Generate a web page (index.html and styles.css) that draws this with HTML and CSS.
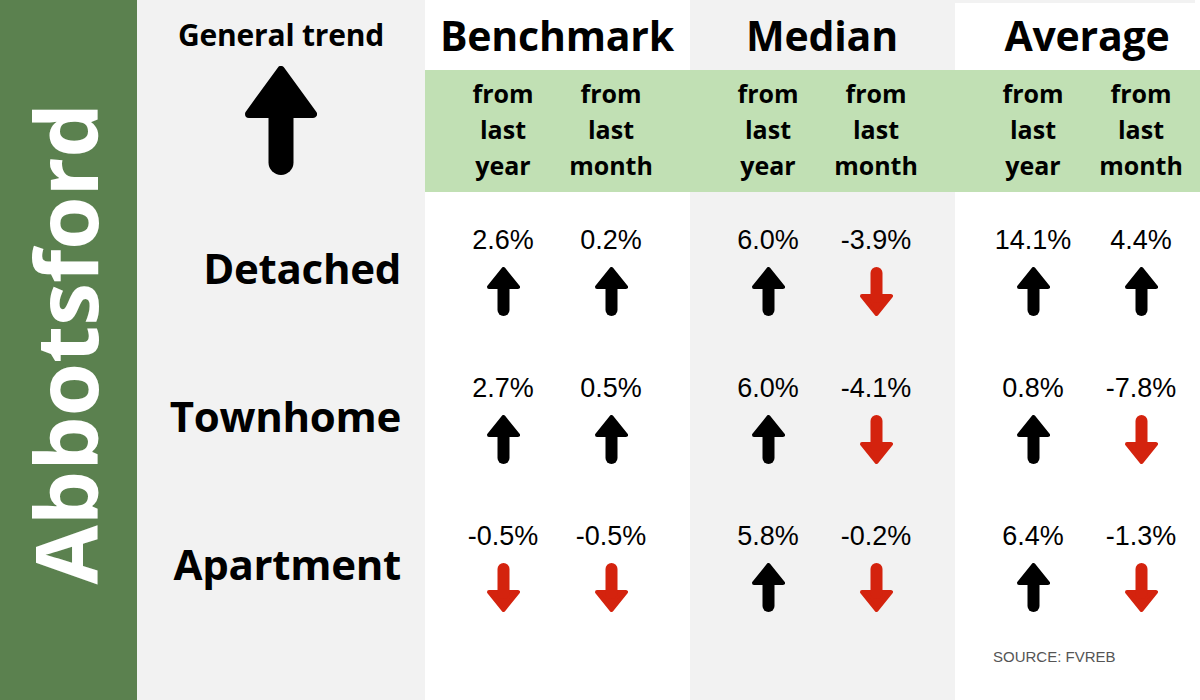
FILE: index.html
```html
<!DOCTYPE html>
<html lang="en">
<head>
<meta charset="utf-8">
<title>Abbotsford market trends</title>
<link rel="stylesheet" href="styles.css">
</head>
<body>
<div class="page">
  <aside class="side"><span class="city">Abbotsford</span></aside>

  <section class="labels">
    <div class="trend">
      <div class="trend-title">General trend</div>
      <svg class="big-arrow" viewBox="0 0 72 109" width="72" height="109" aria-hidden="true">
        <polygon points="36,4 68,48 4,48" fill="#000" stroke="#000" stroke-width="8" stroke-linejoin="round"/>
        <line x1="36" y1="46" x2="36" y2="96.5" stroke="#000" stroke-width="25" stroke-linecap="round"/>
      </svg>
    </div>
    <div class="row-label">Detached</div>
    <div class="row-label">Townhome</div>
    <div class="row-label">Apartment</div>
  </section>

  <section class="group white">
    <h2 class="title">Benchmark</h2>
    <div class="sub"><div>from<br>last<br>year</div><div>from<br>last<br>month</div></div>
    <div class="row">
      <div class="cell"><span class="pct">2.6%</span><svg class="arrow up" viewBox="0 0 33 49"><use href="#up"/></svg></div>
      <div class="cell"><span class="pct">0.2%</span><svg class="arrow up" viewBox="0 0 33 49"><use href="#up"/></svg></div>
    </div>
    <div class="row">
      <div class="cell"><span class="pct">2.7%</span><svg class="arrow up" viewBox="0 0 33 49"><use href="#up"/></svg></div>
      <div class="cell"><span class="pct">0.5%</span><svg class="arrow up" viewBox="0 0 33 49"><use href="#up"/></svg></div>
    </div>
    <div class="row">
      <div class="cell"><span class="pct">-0.5%</span><svg class="arrow down" viewBox="0 0 33 49"><use href="#down"/></svg></div>
      <div class="cell"><span class="pct">-0.5%</span><svg class="arrow down" viewBox="0 0 33 49"><use href="#down"/></svg></div>
    </div>
  </section>

  <section class="group gray">
    <h2 class="title">Median</h2>
    <div class="sub"><div>from<br>last<br>year</div><div>from<br>last<br>month</div></div>
    <div class="row">
      <div class="cell"><span class="pct">6.0%</span><svg class="arrow up" viewBox="0 0 33 49"><use href="#up"/></svg></div>
      <div class="cell"><span class="pct">-3.9%</span><svg class="arrow down" viewBox="0 0 33 49"><use href="#down"/></svg></div>
    </div>
    <div class="row">
      <div class="cell"><span class="pct">6.0%</span><svg class="arrow up" viewBox="0 0 33 49"><use href="#up"/></svg></div>
      <div class="cell"><span class="pct">-4.1%</span><svg class="arrow down" viewBox="0 0 33 49"><use href="#down"/></svg></div>
    </div>
    <div class="row">
      <div class="cell"><span class="pct">5.8%</span><svg class="arrow up" viewBox="0 0 33 49"><use href="#up"/></svg></div>
      <div class="cell"><span class="pct">-0.2%</span><svg class="arrow down" viewBox="0 0 33 49"><use href="#down"/></svg></div>
    </div>
  </section>

  <section class="group white avg">
    <h2 class="title">Average</h2>
    <div class="sub"><div>from<br>last<br>year</div><div>from<br>last<br>month</div></div>
    <div class="row">
      <div class="cell"><span class="pct">14.1%</span><svg class="arrow up" viewBox="0 0 33 49"><use href="#up"/></svg></div>
      <div class="cell"><span class="pct">4.4%</span><svg class="arrow up" viewBox="0 0 33 49"><use href="#up"/></svg></div>
    </div>
    <div class="row">
      <div class="cell"><span class="pct">0.8%</span><svg class="arrow up" viewBox="0 0 33 49"><use href="#up"/></svg></div>
      <div class="cell"><span class="pct">-7.8%</span><svg class="arrow down" viewBox="0 0 33 49"><use href="#down"/></svg></div>
    </div>
    <div class="row">
      <div class="cell"><span class="pct">6.4%</span><svg class="arrow up" viewBox="0 0 33 49"><use href="#up"/></svg></div>
      <div class="cell"><span class="pct">-1.3%</span><svg class="arrow down" viewBox="0 0 33 49"><use href="#down"/></svg></div>
    </div>
    <p class="source">SOURCE: FVREB</p>
  </section>
</div>

<svg class="defs" width="0" height="0" aria-hidden="true">
  <defs>
    <g id="up">
      <polygon points="16.5,2 31,20 2,20" fill="#000" stroke="#000" stroke-width="4" stroke-linejoin="round"/>
      <line x1="16.5" y1="19" x2="16.5" y2="43" stroke="#000" stroke-width="12" stroke-linecap="round"/>
    </g>
    <g id="down">
      <polygon points="16.5,47 31,29 2,29" fill="#d4230e" stroke="#d4230e" stroke-width="4" stroke-linejoin="round"/>
      <line x1="16.5" y1="6" x2="16.5" y2="30" stroke="#d4230e" stroke-width="12" stroke-linecap="round"/>
    </g>
  </defs>
</svg>
</body>
</html>
```

FILE: styles.css
```css
* { box-sizing: border-box; }

html, body {
  margin: 0;
  padding: 0;
}

body {
  width: 1200px;
  height: 700px;
  overflow: hidden;
  background: #f2f2f2;
  font-family: "Open Sans", "Liberation Sans", sans-serif;
  color: #000;
}

.page {
  display: flex;
  height: 700px;
}

/* left green bar */
.side {
  width: 137px;
  flex: none;
  background: #5b814f;
  display: flex;
  align-items: center;
  justify-content: center;
}

.city {
  writing-mode: vertical-rl;
  transform: rotate(180deg);
  color: #fff;
  font-weight: 700;
  font-size: 86px;
  line-height: 1;
  margin-top: -12px;
  margin-right: 8px;
}

/* row labels column */
.labels {
  width: 288px;
  flex: none;
  background: #f2f2f2;
  display: flex;
  flex-direction: column;
}

.trend {
  height: 192px;
  display: flex;
  flex-direction: column;
  align-items: center;
  padding-top: 15px;
}

.trend-title {
  font-size: 30px;
  font-weight: 700;
  line-height: 40px;
  letter-spacing: -0.2px;
}

.big-arrow {
  display: block;
  margin-top: 11px;
}

.row-label {
  height: 148px;
  display: flex;
  align-items: center;
  justify-content: flex-end;
  padding-right: 24px;
  padding-top: 2px;
  font-size: 42px;
  font-weight: 700;
  letter-spacing: -0.3px;
}

/* groups */
.group {
  flex: none;
  display: flex;
  flex-direction: column;
  width: 265px;
}

.group.avg { width: 245px; }

.white { background: #fff; }
.gray { background: #f2f2f2; }

.avg .title {
  background: linear-gradient(#f2f2f2 0 3px, #fff 3px);
}

.title {
  margin: 0;
  height: 70px;
  width: 240px;
  display: flex;
  align-items: center;
  justify-content: center;
  padding-left: 24px;
  font-size: 41px;
  font-weight: 700;
  letter-spacing: -0.2px;
}

.sub {
  height: 122px;
  background: #c1e0b4;
  display: grid;
  grid-template-columns: 108px 108px;
  padding: 5px 0 0 24px;
  font-size: 25px;
  font-weight: 700;
  line-height: 36px;
  text-align: center;
}

.row {
  height: 148px;
  display: grid;
  grid-template-columns: 108px 108px;
  padding: 33px 0 0 24px;
}

.cell {
  display: flex;
  flex-direction: column;
  align-items: center;
}

.pct {
  font-family: "Liberation Sans", Arial, sans-serif;
  font-size: 27px;
  line-height: 30px;
}

.arrow {
  display: block;
  width: 33px;
  height: 49px;
  margin-top: 12px;
}

.source {
  margin: 12px 0 0 38px;
  font-family: "Liberation Sans", Arial, sans-serif;
  font-size: 15px;
  line-height: 17px;
  color: #555;
}

.defs {
  position: absolute;
  width: 0;
  height: 0;
}
```
